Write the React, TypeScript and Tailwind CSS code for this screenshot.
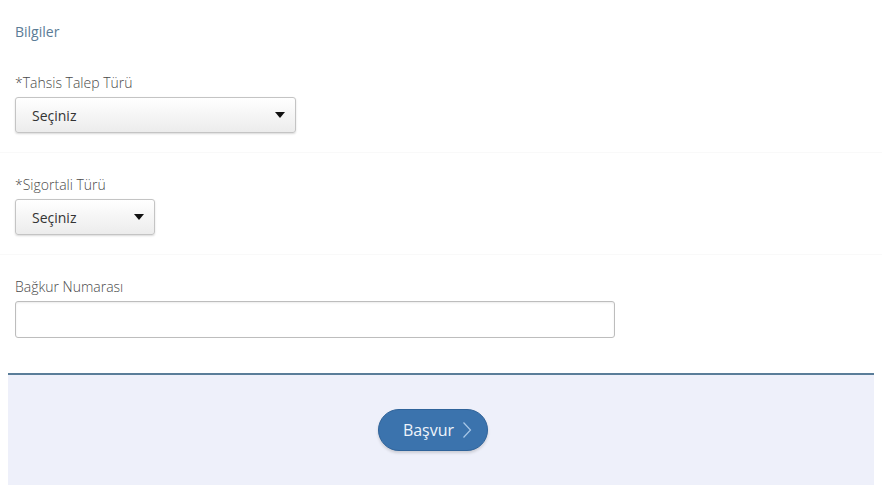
const font = { fontFamily: '"Open Sans", "Liberation Sans", sans-serif' };

function Caret() {
  return (
    <svg width="10" height="6" viewBox="0 0 10 6" className="shrink-0">
      <path d="M0 0 L10 0 L5 6 Z" fill="#111" />
    </svg>
  );
}

function Chevron() {
  return (
    <svg width="10" height="18" viewBox="0 0 10 18" className="shrink-0">
      <path d="M1.5 1.5 L8.5 9 L1.5 16.5" fill="none" stroke="#a9c8e8" strokeWidth="1.2" />
    </svg>
  );
}

function SelectBox({ width }: { width: string }) {
  return (
    <div
      className={`${width} flex h-[36px] items-center justify-between rounded-[3px] border border-[#c4c4c4] bg-gradient-to-b from-white to-[#ececec] pr-[10px] pl-[16px] shadow-[0_1px_2px_rgba(0,0,0,0.15)]`}
    >
      <span className="text-[14px] text-[#333]">Seçiniz</span>
      <Caret />
    </div>
  );
}

function Field({
  label,
  children,
  className,
}: {
  label: string;
  children: React.ReactNode;
  className: string;
}) {
  return (
    <div className={`flex flex-col gap-[5px] px-[15px] ${className}`}>
      <label className="h-[18px] text-[14px] leading-[18px] font-light text-[#4a4a4a]">
        {label}
      </label>
      {children}
    </div>
  );
}

export default function App() {
  return (
    <div className="min-h-[493px] bg-white" style={font}>
      <div className="px-[15px] pt-[23px] text-[14px] leading-[18px] text-[#5b7c96]">
        Bilgiler
      </div>
      <Field
        label="*Tahsis Talep Türü"
        className="border-b border-[#f9f9f9] pt-[33px] pb-[19px]"
      >
        <SelectBox width="w-[281px]" />
      </Field>
      <Field
        label="*Sigortali Türü"
        className="border-b border-[#f9f9f9] pt-[23px] pb-[19px]"
      >
        <SelectBox width="w-[140px]" />
      </Field>
      <Field label="Bağkur Numarası" className="pt-[23px] pb-[35px]">
        <div className="h-[37px] w-[600px] rounded-[3px] border border-[#bdbdbd] bg-white shadow-[inset_0_1px_2px_rgba(0,0,0,0.08)]" />
      </Field>
      <div className="mx-[8px] flex h-[112px] items-center justify-center border-t-2 border-[#5a7d99] bg-[#eef0fa] pr-[17px]">
        <button
          type="button"
          className="flex h-[42px] w-[110px] items-center justify-center gap-[8px] rounded-full border border-[#2f639a] bg-[#3b73ad] pl-[10px] text-[16px] font-medium text-[#eef4fb] shadow-[0_2px_3px_rgba(0,0,0,0.15)]"
        >
          Başvur
          <Chevron />
        </button>
      </div>
    </div>
  );
}
